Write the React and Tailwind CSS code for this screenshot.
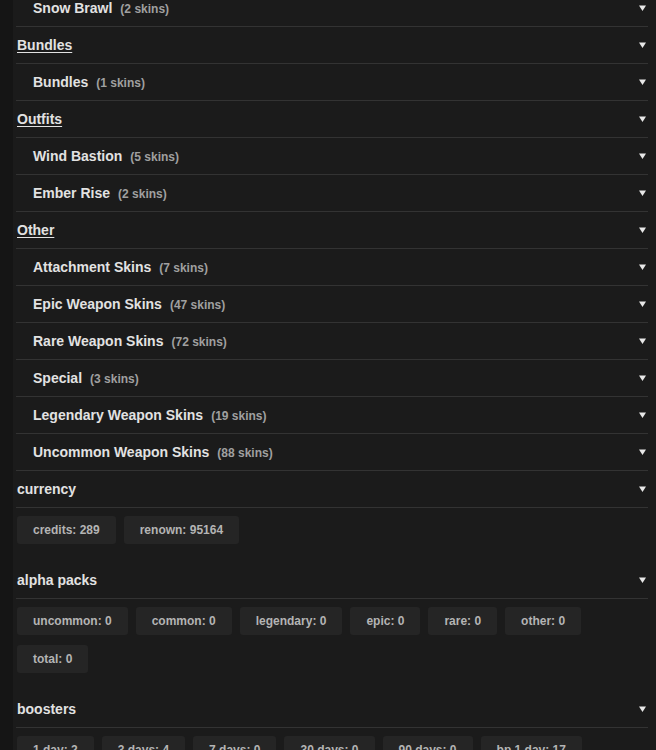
const groups = [
  { title: null, items: [{ name: "Snow Brawl", count: 2 }] },
  { title: "Bundles", items: [{ name: "Bundles", count: 1 }] },
  { title: "Outfits", items: [{ name: "Wind Bastion", count: 5 }, { name: "Ember Rise", count: 2 }] },
  {
    title: "Other",
    items: [
      { name: "Attachment Skins", count: 7 },
      { name: "Epic Weapon Skins", count: 47 },
      { name: "Rare Weapon Skins", count: 72 },
      { name: "Special", count: 3 },
      { name: "Legendary Weapon Skins", count: 19 },
      { name: "Uncommon Weapon Skins", count: 88 },
    ],
  },
];

const stats = [
  { title: "currency", chips: ["credits: 289", "renown: 95164"] },
  {
    title: "alpha packs",
    chips: ["uncommon: 0", "common: 0", "legendary: 0", "epic: 0", "rare: 0", "other: 0", "total: 0"],
  },
  {
    title: "boosters",
    chips: ["1 day: 2", "3 days: 4", "7 days: 0", "30 days: 0", "90 days: 0", "bp 1 day: 17"],
  },
];

const Arrow = () => (
  <svg width="7" height="6" viewBox="0 0 7 6" className="mr-[2px] shrink-0">
    <path d="M0 0.5 L7 0.5 L3.5 6 Z" fill="#e8e8e8" />
  </svg>
);

const Row = ({ children }) => (
  <div className="flex items-center justify-between h-[36px] border-b border-[#333333] box-content">
    {children}
    <Arrow />
  </div>
);

export default function App() {
  return (
    <div className="flex h-[750px] bg-[#1b1b1b] font-['Liberation_Sans',Arial,sans-serif] overflow-hidden">
      <div className="w-[13px] shrink-0 bg-[#151515]" />
      <div className="flex-1 pl-[3px] pr-[8px] -mt-[10px]">
        {groups.map((g, i) => (
          <div key={i}>
            {g.title && (
              <Row>
                <span className="text-[14px] font-bold text-[#e2e2e2] underline underline-offset-2 pl-[1px]">{g.title}</span>
              </Row>
            )}
            {g.items.map((it) => (
              <Row key={it.name}>
                <div className="flex items-baseline gap-[8px] pl-[17px]">
                  <span className="text-[14px] font-bold text-[#e2e2e2]">{it.name}</span>
                  <span className="text-[12px] font-bold text-[#a0a0a0]">({it.count} skins)</span>
                </div>
              </Row>
            ))}
          </div>
        ))}
        {stats.map((s, i) => (
          <div key={s.title} className={i > 0 ? "mt-[18px]" : ""}>
            <Row>
              <span className="text-[14px] font-bold text-[#e2e2e2] pl-[1px]">{s.title}</span>
            </Row>
            <div className="flex flex-wrap gap-x-[8px] gap-y-[10px] mt-[8px] pl-[1px]">
              {s.chips.map((c) => (
                <div
                  key={c}
                  className="h-[28px] px-[16px] flex items-center rounded-[3px] bg-[#252525] text-[12px] font-bold text-[#b4b4b4]"
                >
                  {c}
                </div>
              ))}
            </div>
          </div>
        ))}
      </div>
    </div>
  );
}
